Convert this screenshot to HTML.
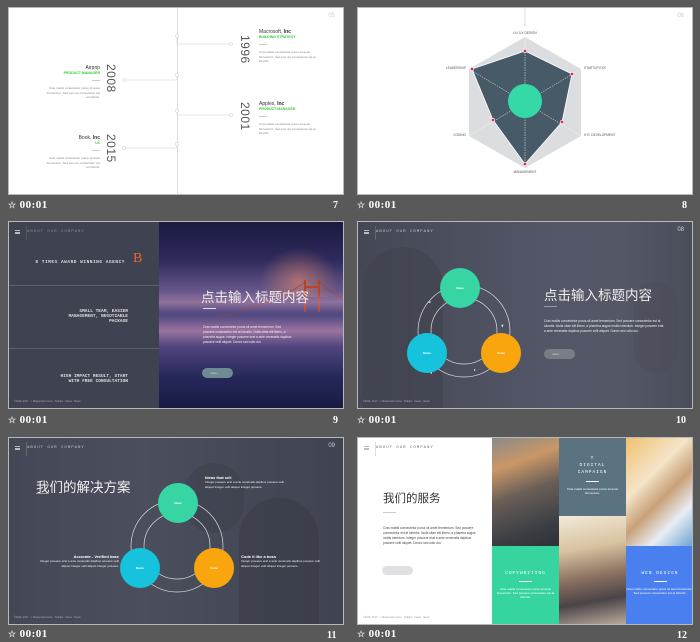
<!DOCTYPE html>
<html><head><meta charset="utf-8">
<style>
*{margin:0;padding:0;box-sizing:border-box}
body{width:700px;height:642px;background:#595959;position:relative;overflow:hidden;font-family:"Liberation Sans","Noto Sans CJK SC",sans-serif}
.s{position:absolute;width:336px;height:188px;border:1px solid #b9b9b9;overflow:hidden}
.a{position:absolute}
.lab{position:absolute;color:#fff;font:bold 11px "Liberation Serif",serif;letter-spacing:0.5px}
.lab .st{font-size:9px;color:#ddd;margin-right:3px}
.num{position:absolute;color:#fff;font:bold 10px "Liberation Serif",serif}
.yr{position:absolute;writing-mode:vertical-rl;font-size:12px;color:#555;letter-spacing:0.5px}
.t{font-size:5px;color:#333}
.g{font-size:3.5px;color:#3c3;font-weight:bold}
.p{font-size:3px;color:#888;line-height:4.5px}
.mono{font-family:"Liberation Mono",monospace}
.hd{position:absolute;left:18px;top:8px;font:4px "Liberation Mono",monospace;color:#ccc;letter-spacing:1px}
.ham{position:absolute;left:6px;top:8px;width:5px;height:4px;border-top:1px solid #bbb;border-bottom:1px solid #bbb}
.ham:after{content:"";position:absolute;left:0;top:1px;width:5px;height:1px;background:#bbb}
.ft{position:absolute;left:5px;bottom:5px;font-size:2.5px;color:#aaa}
.wp{font-size:3px;color:#eee;line-height:5px}
.c{position:absolute;border-radius:50%;color:#fff;font-size:3px;font-weight:bold;display:flex;align-items:center;justify-content:center}
</style></head><body>

<!-- Slide 7 -->
<div class="s" style="left:8px;top:7px;background:#fff">
 <div class="a" style="left:168px;top:0;width:1px;height:188px;background:#ddd"></div>
 <svg class="a" style="left:0;top:0" width="336" height="188">
  <g stroke="#ddd" fill="#fff" stroke-width="0.8">
   <path d="M168 28 V36 H222 M168 103 V107 H222 M168 67 V72 H115 M168 136 V140 H115" fill="none"/>
   <circle cx="168" cy="28" r="1.5"/><circle cx="168" cy="67" r="1.5"/><circle cx="168" cy="103" r="1.5"/><circle cx="168" cy="136" r="1.5"/>
   <circle cx="222" cy="36" r="1.5"/><circle cx="222" cy="107" r="1.5"/><circle cx="115" cy="72" r="1.5"/><circle cx="115" cy="140" r="1.5"/>
  </g>
 </svg>
 <div class="a" style="right:8px;top:5px;font-size:6px;color:#ccc">05</div>
 <div class="yr" style="left:229px;top:27px">1996</div>
 <div class="yr" style="left:229px;top:94px">2001</div>
 <div class="yr" style="left:95px;top:56px">2008</div>
 <div class="yr" style="left:95px;top:126px">2015</div>
 <div class="a" style="left:250px;top:21px;width:60px"><div class="t">Macrosoft, <b>Inc</b></div><div class="g">BUILDING STRATEGY</div><div style="width:8px;height:1px;background:#ccc;margin:5px 0"></div><div class="p">Cras mattis consectetur purus sit amet fermentum. Sed pos ure consectetur est at lobortis.</div></div>
 <div class="a" style="left:250px;top:93px;width:60px"><div class="t">Apples, <b>Inc</b></div><div class="g">PRODUCT MANAGER</div><div style="width:8px;height:1px;background:#ccc;margin:5px 0"></div><div class="p">Cras mattis consectetur purus sit amet fermentum. Sed pos ure consectetur est at lobortis.</div></div>
 <div class="a" style="left:36px;top:57px;width:55px;text-align:right"><div class="t">Airpnp</div><div class="g">PRODUCT MANAGER</div><div style="width:8px;height:1px;background:#ccc;margin:5px 0 5px auto"></div><div class="p">Cras mattis consectetur purus sit amet fermentum. Sed pos ure consectetur est at lobortis.</div></div>
 <div class="a" style="left:36px;top:127px;width:55px;text-align:right"><div class="t">Book, <b>Inc</b></div><div class="g">UX</div><div style="width:8px;height:1px;background:#ccc;margin:5px 0 5px auto"></div><div class="p">Cras mattis consectetur purus sit amet fermentum. Sed pos ure consectetur est at lobortis.</div></div>
</div>
<div class="lab" style="left:8px;top:199px"><span class="st">☆</span>00:01</div>
<div class="num" style="left:333px;top:200px">7</div>

<!-- Slide 8 -->
<div class="s" style="left:357px;top:7px;background:#fff">
 <svg class="a" style="left:0;top:0" width="336" height="188">
  <line x1="167" y1="0" x2="167" y2="17" stroke="#ccc" stroke-width="0.6"/>
  <circle cx="167" cy="17" r="1" fill="#fff" stroke="#ccc" stroke-width="0.5"/>
  <polygon points="167,29 223,61 223,128 167,160 111,128 111,61" fill="#dcdddf"/>
  <polygon points="167,43 214,66 204,114 167,156 135,112 114,61" fill="#465a68" stroke="#fff" stroke-width="0.8"/>
  <g stroke="#fff" stroke-width="0.5" stroke-dasharray="1.5,1" fill="none">
   <line x1="167" y1="29" x2="167" y2="160"/><line x1="111" y1="61" x2="223" y2="128"/><line x1="223" y1="61" x2="111" y2="128"/>
  </g>
  <circle cx="167" cy="93" r="17" fill="#35d9a8"/>
  <g fill="#e0245e" stroke="#fff" stroke-width="0.6">
   <circle cx="167" cy="43" r="1.7"/><circle cx="214" cy="66" r="1.7"/><circle cx="204" cy="114" r="1.7"/><circle cx="167" cy="156" r="1.7"/><circle cx="135" cy="112" r="1.7"/><circle cx="114" cy="61" r="1.7"/>
  </g>
  <g font-size="3.2" fill="#555" font-family="Liberation Sans">
   <text x="167" y="26" text-anchor="middle">UI / UX DESIGN</text>
   <text x="226" y="61">STARTUP EXP.</text>
   <text x="226" y="128">H.R. DEVELOPMENT</text>
   <text x="167" y="165" text-anchor="middle">MANAGEMENT</text>
   <text x="108" y="128" text-anchor="end">CODING</text>
   <text x="108" y="61" text-anchor="end">LEADERSHIP</text>
  </g>
 </svg>
 <div class="a" style="right:8px;top:5px;font-size:6px;color:#ccc">06</div>
</div>
<div class="lab" style="left:357px;top:199px"><span class="st">☆</span>00:01</div>
<div class="num" style="left:682px;top:200px">8</div>

<!-- Slide 9 -->
<div class="s" style="left:8px;top:221px;background:#3e4251">
 <div class="ham"></div><div class="a" style="left:17px;top:4px;width:1px;height:14px;background:#555"></div>
 <div class="hd" style="color:#8a8f9c">ABOUT OUR COMPANY</div>
 <div class="a mono" style="right:218px;top:38px;font-size:4.5px;color:#ddd;font-weight:bold;letter-spacing:0.5px">8 TIMES AWARD WINNING AGENCY</div>
 <div class="a" style="left:124px;top:29px;font:14px 'Liberation Serif',serif;color:#e56a2c">B</div>
 <div class="a" style="left:0;top:63px;width:150px;height:1px;background:#5a5f6e"></div>
 <div class="a" style="left:0;top:126px;width:150px;height:1px;background:#5a5f6e"></div>
 <div class="a mono" style="right:215px;top:87px;font-size:4.5px;color:#ddd;font-weight:bold;text-align:right;line-height:5px">SMALL TEAM, EASIER<br>MANAGEMENT, NEGOTIABLE<br>PACKAGE</div>
 <div class="a mono" style="right:215px;top:152px;font-size:4.5px;color:#ddd;font-weight:bold;text-align:right;line-height:5px">HIGH IMPACT RESULT, START<br>WITH FREE CONSULTATION</div>
 <div class="ft">©2016, 2017 &nbsp; ✓ Responsive Icons &nbsp; Tooltips &nbsp; Cases &nbsp; News</div>
 <div class="a" style="left:150px;top:0;width:186px;height:188px;background:linear-gradient(180deg,#1a1a40 0%,#2e2a5c 20%,#6b5a8e 38%,#544a82 50%,#9a74a0 58%,#52467f 66%,#26285a 82%,#181a42 100%)">
  <div class="a" style="left:100px;top:25px;width:80px;height:50px;background:radial-gradient(ellipse at 50% 70%,rgba(230,140,110,.6),rgba(0,0,0,0) 70%)"></div>
  <svg class="a" style="left:0;top:0" width="186" height="188"><g stroke="#b4452e" stroke-width="2" fill="none"><line x1="146" y1="58" x2="146" y2="90"/><line x1="160" y1="58" x2="160" y2="90"/><line x1="146" y1="65" x2="160" y2="65"/></g><path d="M60 95 Q120 80 146 60 M160 60 Q172 70 186 78" stroke="#a04030" stroke-width="0.6" fill="none"/></svg>
  <div class="a" style="left:0;top:70px;width:186px;height:20px;background:linear-gradient(180deg,rgba(0,0,0,0),rgba(230,170,190,.35),rgba(0,0,0,0))"></div>
  <div class="a" style="left:42px;top:64px;font-size:13.5px;color:#eee">点击输入标题内容</div>
  <div class="a" style="left:44px;top:86px;width:13px;height:1px;background:#ddd"></div>
  <div class="a wp" style="left:44px;top:103px;width:90px;font-size:3.2px">Cras mattis consectetur purus sit amet fermentum. Sed posuere consectetur est at lobortis. Nulla vitae elit libero, a pharetra augue. Integer posuere erat a ante venenatis dapibus posuere velit aliquet. Donec sed odio dui.</div>
  <div class="a" style="left:43px;top:146px;width:31px;height:10px;border-radius:5px;background:#6e8a92;color:#ddd;font-size:3px;padding:3px 0 0 8px">more...</div>
 </div>
</div>
<div class="lab" style="left:8px;top:414px"><span class="st">☆</span>00:01</div>
<div class="num" style="left:333px;top:415px">9</div>

<!-- Slide 10 -->
<div class="s" style="left:357px;top:221px;background:linear-gradient(90deg,#444755 0%,#4c4f5e 30%,#535767 60%,#535766 80%,#4a4d5a 100%)">
 <div class="a" style="left:5px;top:25px;width:80px;height:170px;border-radius:40px 40px 0 0;background:#3d404c;opacity:.5"></div>
 <div class="a" style="left:275px;top:60px;width:45px;height:90px;border-radius:22px;background:#4a4a55;opacity:.35"></div>
 <div class="ham"></div><div class="a" style="left:17px;top:4px;width:1px;height:14px;background:#666"></div>
 <div class="hd">ABOUT OUR COMPANY</div>
 <div class="a" style="right:8px;top:5px;font-size:6px;color:#ccc">08</div>
 <svg class="a" style="left:0;top:0" width="336" height="188"><g stroke="#ddd" stroke-width="0.7" fill="none">
  <circle cx="106" cy="109" r="46"/><circle cx="106" cy="109" r="33"/></g>
  <g fill="#ddd"><path d="M72 79 l-2 2 3-0.5z"/><path d="M143 103 l1.5 2.5 1-3z"/><path d="M116 147 l2 1-2 1z"/><path d="M74 150 l-2 1 2 1z"/></g></svg>
 <div class="c" style="left:82px;top:46px;width:40px;height:40px;background:#37d4a4">Ideas</div>
 <div class="c" style="left:49px;top:111px;width:40px;height:40px;background:#17c3dc">Demo</div>
 <div class="c" style="left:123px;top:111px;width:40px;height:40px;background:#f9a60e">Code</div>
 <div class="a" style="left:186px;top:62px;font-size:13.5px;color:#eee">点击输入标题内容</div>
 <div class="a" style="left:186px;top:84px;width:13px;height:1px;background:#999"></div>
 <div class="a wp" style="left:186px;top:97px;width:120px;font-size:3.2px">Cras mattis consectetur purus sit amet fermentum. Sed posuere consectetur est at lobortis. Nulla vitae elit libero, a pharetra augue mollis interdum. Integer posuere erat a ante venenatis dapibus posuere velit aliquet. Donec sed odio dui.</div>
 <div class="a" style="left:186px;top:127px;width:31px;height:10px;border-radius:5px;background:#7a7d86;color:#ddd;font-size:3px;padding:3px 0 0 8px">more...</div>
 <div class="ft">©2016, 2017 &nbsp; ✓ Responsive Icons &nbsp; Tooltips &nbsp; Cases &nbsp; News</div>
</div>
<div class="lab" style="left:357px;top:414px"><span class="st">☆</span>00:01</div>
<div class="num" style="left:676px;top:415px">10</div>

<!-- Slide 11 -->
<div class="s" style="left:8px;top:437px;background:linear-gradient(90deg,#444856 0%,#4a4e5d 40%,#454957 70%,#404351 100%)">
 <div class="a" style="left:175px;top:25px;width:60px;height:70px;border-radius:30px;background:#3a3c48;opacity:.4"></div>
 <div class="a" style="left:230px;top:60px;width:80px;height:130px;border-radius:40px 40px 0 0;background:#363843;opacity:.45"></div>
 <div class="ham"></div><div class="a" style="left:17px;top:4px;width:1px;height:14px;background:#666"></div>
 <div class="hd">ABOUT OUR COMPANY</div>
 <div class="a" style="right:8px;top:5px;font-size:6px;color:#ccc">09</div>
 <div class="a" style="left:27px;top:38px;font-size:13.5px;color:#eee">我们的解决方案</div>
 <div class="a" style="left:27px;top:55px;width:13px;height:1px;background:#999"></div>
 <svg class="a" style="left:0;top:0" width="336" height="188"><g stroke="#ddd" stroke-width="0.7" fill="none">
  <circle cx="168" cy="108" r="46"/><circle cx="168" cy="108" r="33"/></g></svg>
 <div class="c" style="left:149px;top:45px;width:40px;height:40px;background:#37d4a4">Ideas</div>
 <div class="c" style="left:111px;top:110px;width:40px;height:40px;background:#17c3dc">Demo</div>
 <div class="c" style="left:185px;top:110px;width:40px;height:40px;background:#f9a60e">Code</div>
 <div class="a" style="left:196px;top:37px;width:80px"><div style="font-size:4px;font-weight:bold;color:#fff">Ideas that sell</div><div class="wp" style="font-size:3px;line-height:4.5px">Integer posuere erat a ante venenatis dapibus posuere velit aliquet Integer velit aliquet Integer posuere.</div></div>
 <div class="a" style="left:232px;top:116px;width:80px"><div style="font-size:4px;font-weight:bold;color:#fff">Code it like a boss</div><div class="wp" style="font-size:3px;line-height:4.5px">Integer posuere erat a ante venenatis dapibus posuere velit aliquet Integer velit aliquet Integer posuere.</div></div>
 <div class="a" style="left:30px;top:116px;width:80px;text-align:right"><div style="font-size:4px;font-weight:bold;color:#fff">Accurate - Verified base</div><div class="wp" style="font-size:3px;line-height:4.5px">Integer posuere erat a ante venenatis dapibus posuere velit aliquet Integer velit aliquet Integer posuere.</div></div>
 <div class="ft">©2016, 2017 &nbsp; ✓ Responsive Icons &nbsp; Tooltips &nbsp; Cases &nbsp; News</div>
</div>
<div class="lab" style="left:8px;top:628px"><span class="st">☆</span>00:01</div>
<div class="num" style="left:327px;top:630px">11</div>

<!-- Slide 12 -->
<div class="s" style="left:357px;top:437px;background:#fff">
 <div class="ham"></div><div class="a" style="left:17px;top:4px;width:1px;height:14px;background:#ddd"></div>
 <div class="hd" style="color:#666">ABOUT OUR COMPANY</div>
 <div class="a" style="left:25px;top:52px;font-size:11.5px;color:#333">我们的服务</div>
 <div class="a" style="left:25px;top:74px;width:13px;height:1px;background:#ccc"></div>
 <div class="a" style="left:25px;top:88px;width:95px;font-size:3.2px;color:#444;line-height:5px">Cras mattis consectetur purus sit amet fermentum. Sed posuere consectetur est at lobortis. Nulla vitae elit libero, a pharetra augue mollis interdum. Integer posuere erat a ante venenatis dapibus posuere velit aliquet. Donec sed odio dui.</div>
 <div class="a" style="left:24px;top:128px;width:31px;height:9px;border-radius:5px;background:#e0e0e2"></div>
 <div class="ft" style="color:#999">©2016, 2017 &nbsp; ✓ Responsive Icons &nbsp; Tooltips &nbsp; Cases &nbsp; News</div>
 <div class="a" style="left:134px;top:0;width:67px;height:108px;background:linear-gradient(160deg,#8a8a8a 0%,#c99766 25%,#6a5e58 50%,#3b3f44 80%,#2e3238 100%)"></div>
 <div class="a" style="left:134px;top:108px;width:67px;height:80px;background:#36d49f;color:#fff;text-align:center">
  <div class="mono" style="margin-top:25px;font-size:4.5px;letter-spacing:1px">COPYWRITING</div><div style="width:13px;height:1px;background:#fff;margin:5px auto"></div><div style="font-size:3px;line-height:4px">Cras mattis consectetur purus sit amet fermentum. Sed posuere consectetur est at lobortis.</div></div>
 <div class="a" style="left:201px;top:0;width:67px;height:78px;background:#5b7381;color:#fff;text-align:center">
  <div class="mono" style="margin-top:17px;font-size:4.5px;letter-spacing:1px;line-height:7px">Y<br>DIGITAL<br>CAMPAIGN</div><div style="width:13px;height:1px;background:#fff;margin:5px auto"></div><div style="font-size:3px;line-height:4px">Cras mattis consectetur purus sit amet fermentum.</div></div>
 <div class="a" style="left:201px;top:78px;width:67px;height:110px;background:linear-gradient(170deg,#f2ead8 0%,#d8c2a0 30%,#8a7060 55%,#4a4448 75%,#c0b0a0 100%)"></div>
 <div class="a" style="left:268px;top:0;width:68px;height:108px;background:linear-gradient(135deg,#f0c070 0%,#f4e4c8 35%,#c8a078 55%,#e8eef4 75%,#6aa0d0 100%)"></div>
 <div class="a" style="left:268px;top:108px;width:68px;height:80px;background:#4a7ff0;color:#fff;text-align:center">
  <div class="mono" style="margin-top:25px;font-size:4.5px;letter-spacing:1px">WEB DESIGN</div><div style="width:13px;height:1px;background:#fff;margin:5px auto"></div><div style="font-size:3px;line-height:4px">Cras mattis consectetur purus sit amet fermentum. Sed posuere consectetur est at lobortis.</div></div>
</div>
<div class="lab" style="left:357px;top:628px"><span class="st">☆</span>00:01</div>
<div class="num" style="left:677px;top:630px">12</div>

</body></html>
